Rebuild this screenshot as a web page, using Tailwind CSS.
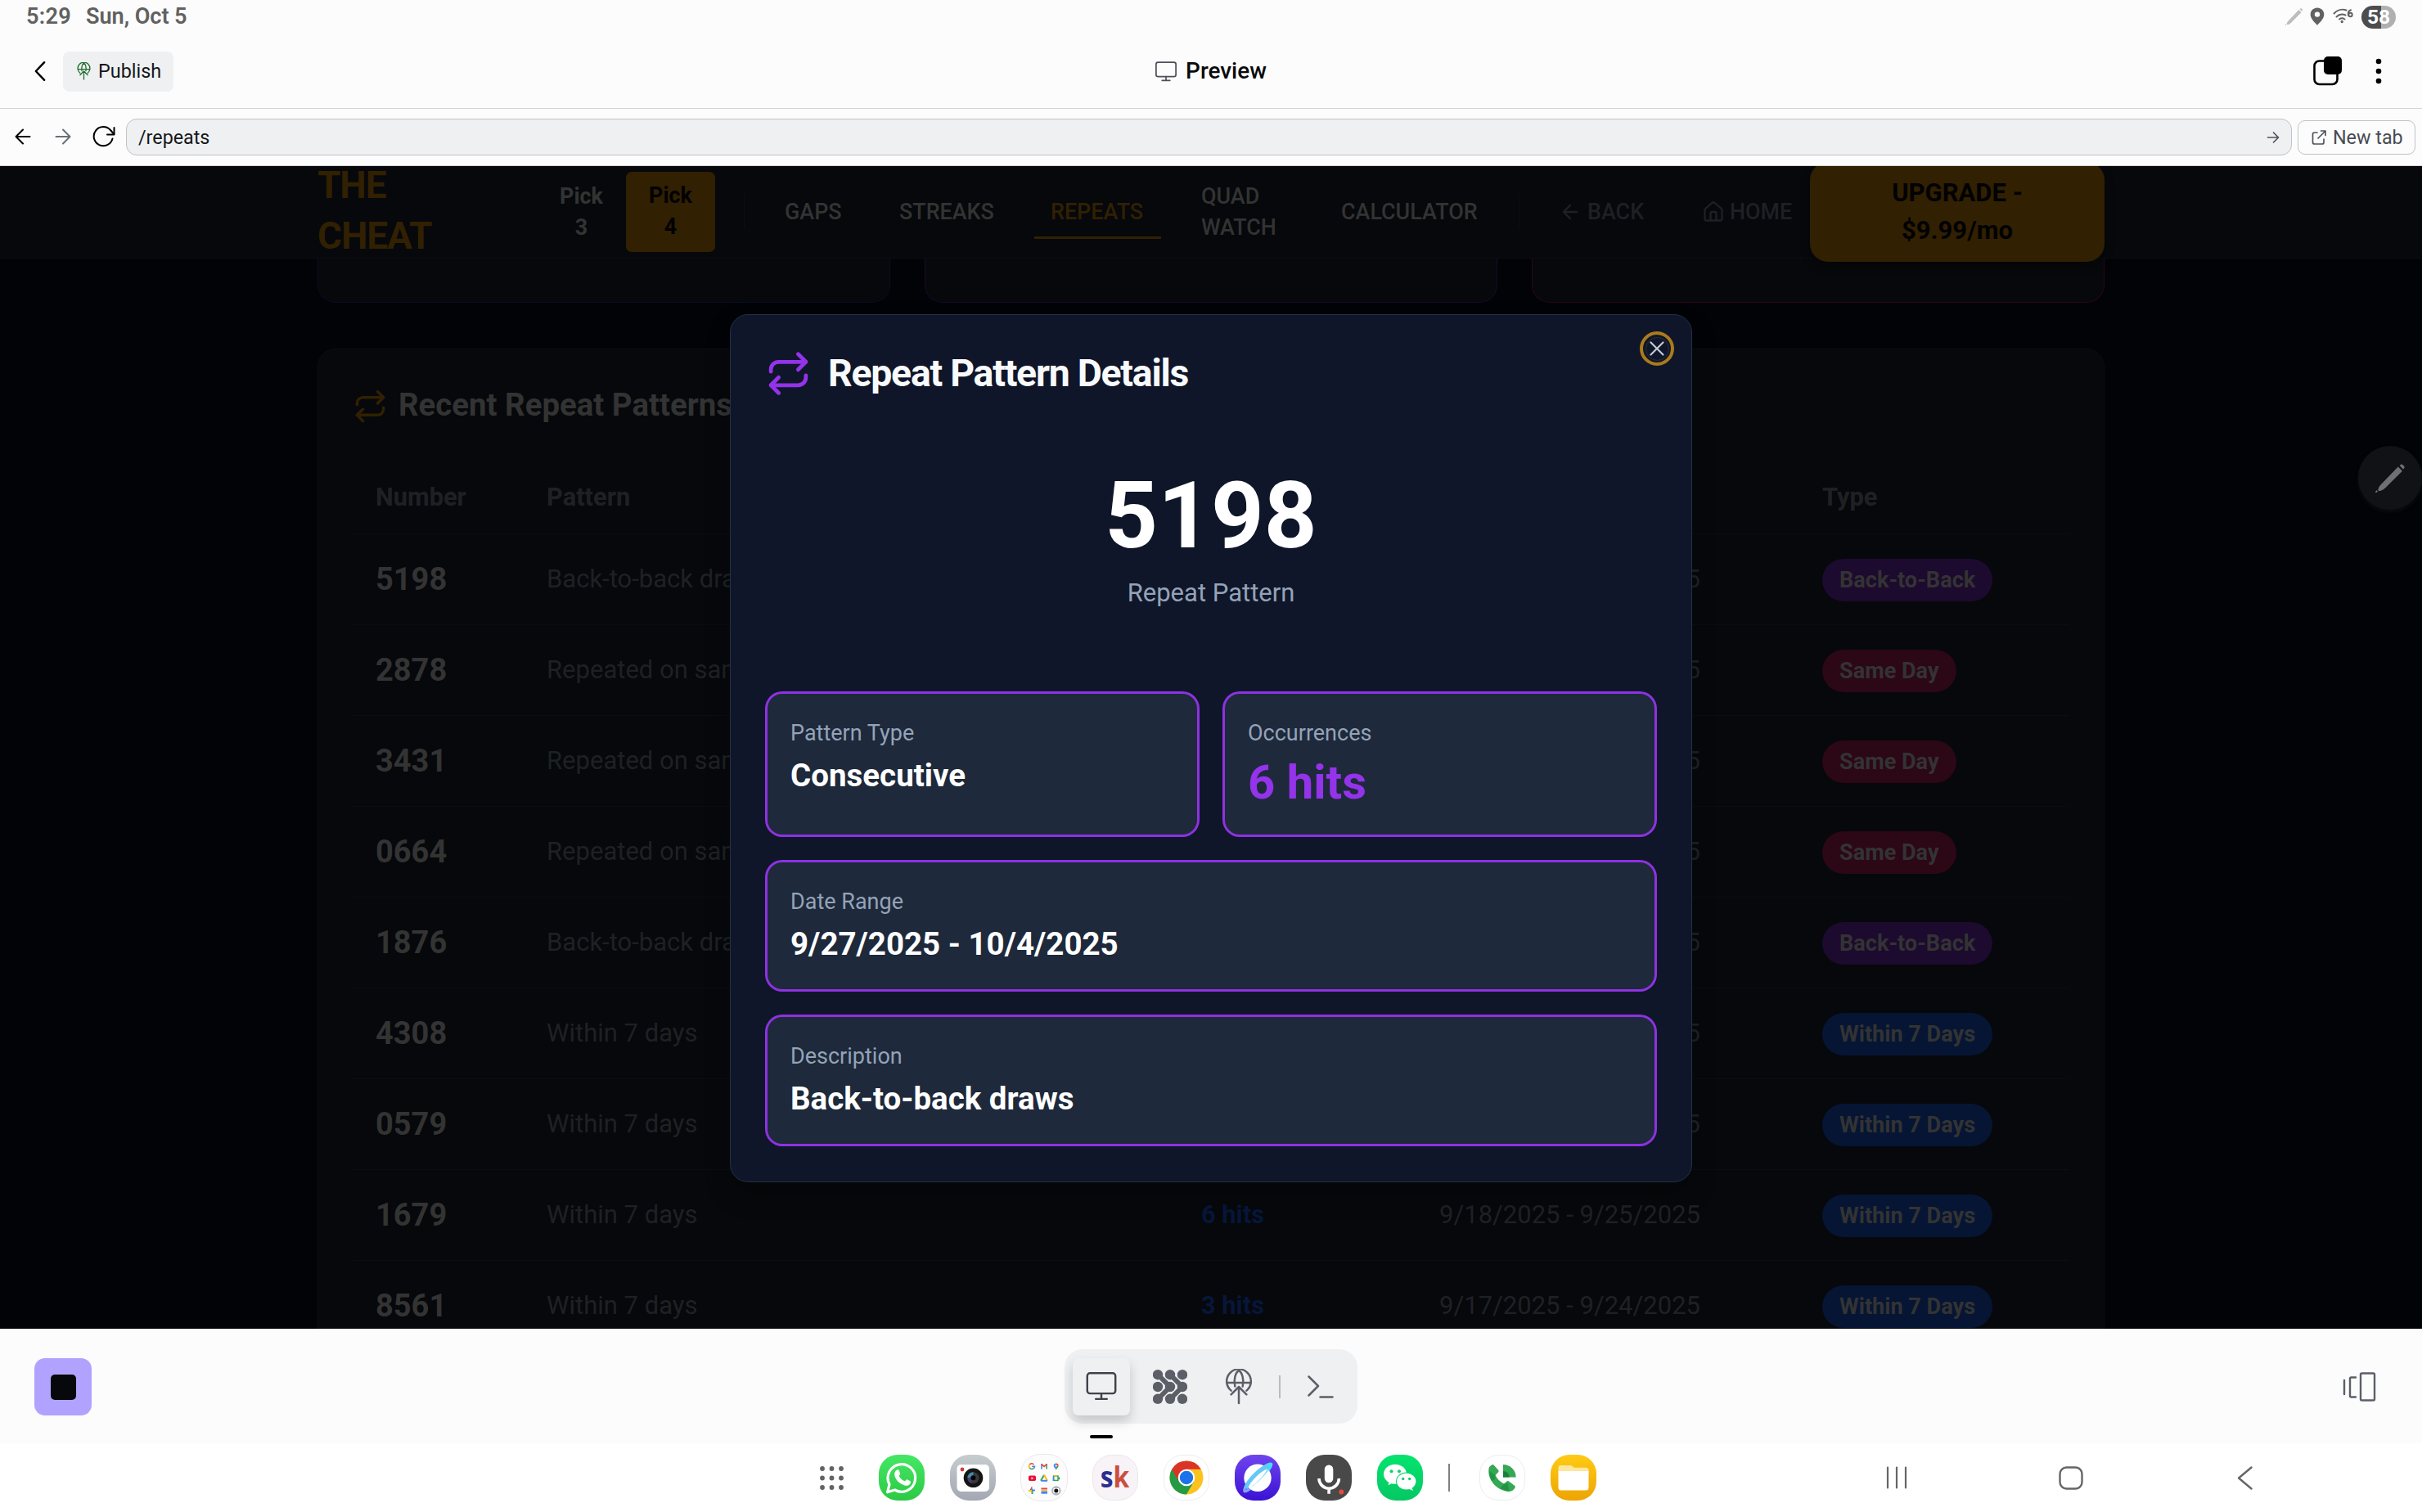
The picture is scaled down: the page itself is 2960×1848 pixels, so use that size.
<!DOCTYPE html>
<html lang="en">
<head>
<meta charset="utf-8">
<title>Preview</title>
<script src="https://cdn.jsdelivr.net/npm/@tailwindcss/browser@4"></script>
</head>
<body class="w-[2960px] h-[1848px] overflow-hidden flex flex-col bg-[#fcfcfc] font-['Roboto',sans-serif] text-black">

<!-- Shared icon shapes -->
<svg class="hidden">
  <symbol id="repeat" viewBox="0 0 24 24" fill="none" stroke="currentColor" stroke-width="2" stroke-linecap="round" stroke-linejoin="round"><path d="m17 2 4 4-4 4"/><path d="M3 11v-1a4 4 0 0 1 4-4h14"/><path d="m7 22-4-4 4-4"/><path d="M21 13v1a4 4 0 0 1-4 4H3"/></symbol>
  <symbol id="globe-up" viewBox="0 0 34 44" fill="none" stroke="currentColor" stroke-width="2.500" stroke-linecap="round" stroke-linejoin="round"><path d="M7.6 26.6A14.8 14.8 0 1 1 26.4 26.6"/><path d="M2.2 17h29.6"/><path d="M12.3 21.5C10.3 13 13 4.500 17 2.200c4 2.300 6.700 10.800 4.700 19.300"/><path d="M17 42V22M7.600 31.400 17 22l9.400 9.400"/></symbol>
  <symbol id="monitor" viewBox="0 0 38 36" fill="none" stroke="currentColor" stroke-width="2.500" stroke-linecap="round" stroke-linejoin="round"><rect x="1.300" y="1.300" width="35.400" height="25.600" rx="3.500"/><path d="M19 27v6.500M12 33.800h14"/></symbol>
  <symbol id="pen" viewBox="0 0 40 38" fill="currentColor"><path d="M33.500 1.500c.8-.8 2-.6 2.700.1l1.800 1.900c.7.8.7 1.800 0 2.600l-1.200 1.200-4.500-4.500z"/><path d="m30.300 4.300 5.400 5.400-21.700 21.700c-2.500 2.400-5.400 3.900-8 4.200-1.300-.4-1.600-1.300-1.300-2.400.7-2.600 2.200-4.900 4.500-7z"/><path d="m2.500 34.300 1.700 1.700-1.700 1.300c-.9.500-1.700-.2-1.300-1.200z"/></symbol>
</svg>

<!-- System status bar -->
<div class="h-[40px] shrink-0 flex items-center justify-between pl-[32px] pr-[32px] text-[#616161]">
  <div class="flex items-center gap-[18px] font-semibold text-[27.100px] leading-[38px] tracking-[0.300px]"><span>5:29</span><span class="tracking-[-0.050px]">Sun, Oct 5</span></div>
  <div class="flex items-center">
    <svg class="w-[23px] h-[23px] text-[#bdbdbd]"><use href="#pen"/></svg>
    <svg class="ml-[8px] w-[18px] h-[22px]" viewBox="0 0 18 22" fill="#616161"><path fill-rule="evenodd" d="M9 .5C4.300.5.700 4.100.700 8.700.700 14 6 18.500 9 21.700c3-3.200 8.300-7.700 8.300-13C17.300 4.100 13.700.5 9 .5zm0 11.300a3.200 3.200 0 1 1 0-6.400 3.200 3.200 0 0 1 0 6.400z"/></svg>
    <svg class="ml-[10px] w-[25px] h-[22px]" viewBox="0 0 25 22" fill="none" stroke="#616161" stroke-width="2" stroke-linecap="round"><path d="M1.500 7.500A14 14 0 0 1 16.500 3.500"/><path d="M4.500 11.500A10 10 0 0 1 15.500 9.500"/><path d="M8 14.500a5.500 5.500 0 0 1 6.500 0"/><circle cx="11.200" cy="17.500" r=".7" fill="#616161"/><path d="M22 3.200c-3 .8-3.400 4-3 6.300"/><circle cx="21.500" cy="9" r="2.200"/></svg>
    <div class="ml-[10px] w-[42px] h-[28px] mt-[1px] rounded-full flex items-center justify-center text-white text-[24.500px] font-bold leading-[28px] bg-linear-to-r from-[#4d4d4d] from-58% to-[#b0b0b0] to-58%">58</div>
  </div>
</div>

<!-- App header -->
<header class="h-[93px] shrink-0 border-b border-[#d3d4d6] grid grid-cols-3 items-center pb-0">
  <div class="flex items-center pl-[41px]">
    <svg class="w-[16px] h-[26px] mt-px" viewBox="0 0 17 26" fill="none" stroke="#000" stroke-width="2.600" stroke-linecap="round" stroke-linejoin="round"><path d="M14 1.500 3 13l11 11.500"/></svg>
    <div class="ml-[20px] w-[135px] h-[49px] mt-[2px] rounded-[8px] bg-[#eff0f2] flex items-center pl-[17px]">
      <svg class="w-[17px] h-[22px] text-[#1c6b2c]"><use href="#globe-up"/></svg>
      <span class="ml-[8px] pl-px text-[23.400px] leading-[30px] text-[#15171a]">Publish</span>
    </div>
  </div>
  <div class="flex items-center justify-center gap-[11px] mt-[2px]">
    <svg class="w-[26px] h-[25px] text-[#4c4f57]"><use href="#monitor"/></svg>
    <span class="text-[27.900px] leading-[36px] font-medium text-[#0a0a0b]">Preview</span>
  </div>
  <div class="flex items-center justify-end pr-[49px]">
    <svg class="w-[36px] h-[37px] mt-[1px]" viewBox="0 0 36 37"><rect x="1.500" y="6.500" width="28" height="28.500" rx="6" fill="none" stroke="#000" stroke-width="2.600"/><rect x="13" y="1" width="22" height="22" rx="5" fill="#000"/></svg>
    <svg class="ml-[40px] w-[8px] h-[32px] mt-px" viewBox="0 0 8 32"><circle cx="4" cy="4" r="3.300"/><circle cx="4" cy="16" r="3.300"/><circle cx="4" cy="28" r="3.300"/></svg>
  </div>
</header>

<!-- Address bar -->
<div class="h-[70px] shrink-0 border-b border-[#d3d4d6] flex items-center pl-[17px] pr-[8px]">
  <svg class="w-[22px] h-[22px] -mt-[2px]" viewBox="0 0 22 22" fill="none" stroke="#000" stroke-width="2" stroke-linecap="round" stroke-linejoin="round"><path d="M19.500 11H2.500M11 2.500 2.500 11l8.500 8.500"/></svg>
  <svg class="ml-[27px] w-[22px] h-[22px] -mt-[2px]" viewBox="0 0 22 22" fill="none" stroke="#6b6e75" stroke-width="2" stroke-linecap="round" stroke-linejoin="round"><path d="M2.500 11h17M11 2.500l8.500 8.500-8.500 8.500"/></svg>
  <svg class="ml-[25px] w-[28px] h-[26px] -mt-[2px]" viewBox="0 0 28 26" fill="none" stroke="#000" stroke-width="2" stroke-linecap="round" stroke-linejoin="round"><path d="M26.500 2v8.500H18"/><path d="M24.500 15.500A11.600 11.600 0 1 1 22 5l4.300 5"/></svg>
  <div class="ml-[13px] w-[2647px] h-[45px] rounded-[13px] border border-[#c0c2c6] bg-[#eff0f2] flex items-center justify-between pl-[14px] pr-[14px]">
    <span class="text-[23.300px] leading-[30px] text-[#15171a]">/repeats</span>
    <svg class="w-[16px] h-[16px]" viewBox="0 0 16 16" fill="none" stroke="#50535b" stroke-width="1.700" stroke-linecap="round" stroke-linejoin="round"><path d="M1.500 8h13M8.500 2l6 6-6 6"/></svg>
  </div>
  <div class="ml-[7px] w-[144px] h-[42px] rounded-[9px] border border-[#c0c2c6] flex items-center pl-[16px]">
    <svg class="w-[18px] h-[18px]" viewBox="0 0 18 18" fill="none" stroke="#50535b" stroke-width="1.700" stroke-linecap="round" stroke-linejoin="round"><path d="M7 3H3.500A2 2 0 0 0 1.500 5v10a2 2 0 0 0 2 2h9.500a2 2 0 0 0 2-2v-4"/><path d="M11.500 1h5.500v5.500M17 1 8 10"/></svg>
    <span class="ml-[8px] text-[23.300px] leading-[30px] text-[#484b52]">New tab</span>
  </div>
</div>

<!-- Previewed page -->
<main class="relative h-[1421px] shrink-0 overflow-hidden bg-[#020307]">
  <nav class="-mt-px h-[114px] bg-[#06080b] border-b border-[#0b0d11] pl-[388px] flex items-center font-medium text-[26.900px] leading-[38px] text-[#333]">
    <div class="w-[268px] -mt-[3px] text-[46px] leading-[62px] font-bold tracking-[-1.160px] text-[#312002]">THE<br>CHEAT</div>
    <div class="w-[109px] text-center font-bold">Pick<br>3</div>
    <div class="w-[109px] h-[98px] rounded-[7px] bg-[#312002] text-[#020202] text-center font-bold pt-[10px] mt-[1px]">Pick<br>4</div>
    <div class="ml-[35px] w-px h-[43px] bg-[#0b0d11]"></div>
    <div class="ml-[49px]  w-[140px]">GAPS</div>
    <div class="w-[165px]">STREAKS</div>
    <div class="w-[155px] h-[66px] border-b-3 border-[#312002] pl-[20px] pt-[14px] text-[#312002] mt-[1px]">REPEATS</div>
    <div class="ml-[49px] w-[171px]">QUAD<br>WATCH</div>
    <div class="w-[217px]">CALCULATOR</div>
    <div class="w-px h-[43px] bg-[#0b0d11]"></div>
    <div class="ml-[48px] flex items-center text-[#1d2024]">
      <svg class="w-[28px] h-[28px]" viewBox="0 0 24 24" fill="none" stroke="currentColor" stroke-width="2" stroke-linecap="round" stroke-linejoin="round"><path d="m12 19-7-7 7-7M19 12H5"/></svg>
      <span class="ml-[7px] w-[140px]">BACK</span>
      <svg class="w-[28px] h-[28px]" viewBox="0 0 24 24" fill="none" stroke="currentColor" stroke-width="2" stroke-linecap="round" stroke-linejoin="round"><path d="M15 21v-8a1 1 0 0 0-1-1h-4a1 1 0 0 0-1 1v8"/><path d="M3 10a2 2 0 0 1 .709-1.528l7-5.999a2 2 0 0 1 2.582 0l7 5.999A2 2 0 0 1 21 10v9a2 2 0 0 1-2 2H5a2 2 0 0 1-2-2z"/></svg>
      <span class="ml-[6px] w-[98px]">HOME</span>
    </div>
    <div class="relative z-10 w-[360px] h-[122px] shrink-0 rounded-[22px] bg-[#312002] text-[#020202] text-[31px] leading-[46px] font-bold text-center pt-[15px] shadow-[0_6px_12px_rgba(0,0,0,0.350)]">UPGRADE -<br>$9.99/mo</div>
  </nav>

  <section class="pl-[388px] flex gap-[42px]">
    <div class="w-[700px] h-[54px] rounded-b-[22px] bg-[#06080b] border border-t-0 border-[#051022]"></div>
    <div class="w-[700px] h-[54px] rounded-b-[22px] bg-[#06080b] border border-t-0 border-[#1a0a2b]"></div>
    <div class="w-[700px] h-[54px] rounded-b-[22px] bg-[#06080b] border border-t-0 border-[#2b0716]"></div>
  </section>

  <section class="ml-[388px] mt-[56px] w-[2184px] h-[1260px] rounded-[22px] bg-[#06080b] border border-[#0b0d11] px-[42px]">
    <div class="h-[135px] flex items-center gap-[12px]">
      <svg class="w-[43px] h-[43px] text-[#312002] mt-[3px]"><use href="#repeat"/></svg>
      <h2 class="pl-px text-[38.400px] font-bold leading-[54px] text-[#333]">Recent Repeat Patterns</h2>
    </div>
    <div id="table" class="[&>div]:grid [&>div]:grid-cols-[209px_800px_291px_468px_1fr] [&>div]:items-center [&>div]:pl-[28px] [&>div]:border-b [&>div]:border-[#0b0d11]">
      <div class="h-[91px] text-[30.800px] font-bold text-[#1e2124] pt-[3px]"><span>Number</span><span>Pattern</span><span></span><span></span><span>Type</span></div>
    </div>
  </section>

  <!-- Floating pen control -->
  <div class="absolute left-[2882px] top-[342px] w-[78px] h-[78px] rounded-full bg-[#111215] flex items-center justify-center shadow-[0_3px_4px_rgba(17,18,21,0.600)]"><svg class="w-[38px] h-[37px] text-[#6f7073]"><use href="#pen"/></svg></div>

  <!-- Pattern details dialog -->
  <div class="absolute z-20 left-[892px] top-[181px] w-[1176px] h-[1061px] rounded-[22px] border border-[#22304a] bg-[#0f1629] px-[42px] pt-[42px] text-white shadow-[0_15px_30px_rgba(0,0,0,0.250)]">
    <div class="flex items-center h-[58px] gap-[17px]">
      <svg class="w-[57px] h-[57px] text-[#9333ea]"><use href="#repeat"/></svg>
      <h1 class="ml-[3px] text-[46.400px] font-bold tracking-[-1.250px] leading-[58px] text-[#f8fafc]">Repeat Pattern Details</h1>
    </div>
    <div class="mt-[88px] text-center text-[113px] leading-[115px] font-bold">5198</div>
    <div class="mt-[14px] text-center text-[31px] leading-[46px] text-[#94a3b8]">Repeat Pattern</div>
    <div class="mt-[97px] grid grid-cols-2 gap-[28px] text-[38.500px] leading-[54px] font-bold [&>div]:border-3 [&>div]:border-[#9333ea]/95 [&>div]:rounded-[21px] [&>div]:bg-[#1e293b] [&>div]:px-[28px] [&>div]:pt-[29px] [&_span]:block [&_span]:mb-[6px] [&_span]:text-[27px] [&_span]:leading-[38px] [&_span]:font-normal [&_span]:text-[#94a3b8]">
      <div class="h-[178px]"><span>Pattern Type</span><p>Consecutive</p></div>
      <div class="h-[178px]"><span>Occurrences</span><p class="text-[58px] leading-[70px] font-bold text-[#9333ea]">6 hits</p></div>
      <div class="col-span-2 h-[161px]"><span>Date Range</span><p>9/27/2025 - 10/4/2025</p></div>
      <div class="col-span-2 h-[161px]"><span>Description</span><p>Back-to-back draws</p></div>
    </div>
    <button class="absolute left-[1111px] top-[20px] w-[42px] h-[42px] rounded-full border-4 border-[#ab7a1c] flex items-center justify-center">
      <span class="w-[29px] h-[29px] shrink-0 rounded-full border border-[#2b3038] flex items-center justify-center"><svg class="w-[18px] h-[18px] shrink-0" viewBox="0 0 18 18" stroke="#c3c8d2" stroke-width="2.200" stroke-linecap="round"><path d="m1.500 1.500 15 15M16.500 1.500l-15 15"/></svg></span>
    </button>
  </div>
</main>

<!-- Workspace toolbar -->
<footer class="h-[140px] shrink-0 grid grid-cols-[1fr_358px_1fr] items-center">
  <div class="ml-[42px] w-[70px] h-[70px] rounded-[13px] bg-[#b1a2ff] flex items-center justify-center mt-[2px]"><div class="w-[31px] h-[31px] rounded-[5px] bg-[#07080b]"></div></div>
  <div class="relative h-[91px] rounded-[22px] bg-[#eff0f2] flex items-center pl-[10px] mt-px text-[#5c5f68]">
    <div class="w-[70px] h-[70px] rounded-[7px] bg-[#eff0f2] shadow-[0_7px_14px_rgba(0,0,0,0.180)] flex items-center justify-center"><svg class="w-[38px] h-[35px] text-[#40424a]"><use href="#monitor"/></svg></div>
    <svg class="ml-[28px] w-[42px] h-[42px]" viewBox="0 0 42 42" fill="currentColor" stroke="none"><path d="M6 6 21 21 6 36M21 6 36 21 21 36" fill="none" stroke="currentColor" stroke-width="6"/><circle cx="6" cy="6.200" r="6.200"/><circle cx="21" cy="6.200" r="6.200"/><circle cx="36" cy="6.200" r="6.200"/><circle cx="6" cy="21" r="6.200"/><circle cx="21" cy="21" r="6.200"/><circle cx="36" cy="21" r="6.200"/><circle cx="6" cy="35.800" r="6.200"/><circle cx="21" cy="35.800" r="6.200"/><circle cx="36" cy="35.800" r="6.200"/></svg>
    <svg class="ml-[46px] w-[34px] h-[44px]"><use href="#globe-up"/></svg>
    <div class="ml-[32px] w-[2px] h-[28px] bg-[#b9bbc0]"></div>
    <svg class="ml-[33px] w-[32px] h-[28px]" viewBox="0 0 32 28" fill="none" stroke="currentColor" stroke-width="2.500" stroke-linecap="round" stroke-linejoin="round"><path d="m1.500 1.500 11.500 11.500L1.500 24.500M15.500 26.500h15"/></svg>
    <div class="absolute left-[31px] top-[105px] w-[28px] h-[4px] rounded-full bg-black"></div>
  </div>
  <svg class="justify-self-end mr-[56px] w-[42px] h-[36px] mt-px" viewBox="0 0 42 36" fill="none" stroke="#5c5f68" stroke-width="2.400" stroke-linecap="round" stroke-linejoin="round"><path d="M3 10v17M17 6.500h-5.500q-1.500 0-1.500 1.500v21q0 1.500 1.500 1.500H17"/><rect x="23" y="1.500" width="17" height="33" rx="1.500"/></svg>
</footer>

<!-- System dock -->
<div class="relative h-[84px] shrink-0 bg-white flex items-center pl-[1001px]">
  <svg class="w-[30px] h-[30px]" viewBox="0 0 30 30" fill="#636363"><circle cx="4" cy="4" r="2.900"/><circle cx="15.500" cy="4" r="2.900"/><circle cx="27" cy="4" r="2.900"/><circle cx="4" cy="15.500" r="2.900"/><circle cx="15.500" cy="15.500" r="2.900"/><circle cx="27" cy="15.500" r="2.900"/><circle cx="4" cy="27" r="2.900"/><circle cx="15.500" cy="27" r="2.900"/><circle cx="27" cy="27" r="2.900"/></svg>

  <div class="ml-[43px] w-[1300px] flex items-center gap-[31px]">
    <svg class="w-[56px] h-[56px] rounded-[23px]" viewBox="0 0 56 56"><defs><linearGradient id="gw" x2="0" y2="1"><stop stop-color="#45e765"/><stop offset="1" stop-color="#2cc944"/></linearGradient></defs><rect width="56" height="56" fill="url(#gw)"/><path d="M10.500 45.800 13 36.300A16.800 16.800 0 1 1 19.500 43z" fill="none" stroke="#fff" stroke-width="3.200" stroke-linejoin="round"/><path d="M21.500 19c1.800-1.300 2.800-.7 3.300.6l1.300 3.200c.5 1.200-1.600 2.800-1.300 3.400 1.700 3 4 4.900 6.800 6.100.8.300 2-2.500 3.200-2l3.300 1.700c1.400.6 1 2.300.3 3.400-1.500 2.400-4.700 3-7.700 1.900-5.200-1.800-8.500-5-10.500-9.200-1.500-3.300-1.300-7.200 1.300-9.100z" fill="#fff"/></svg>

    <svg class="w-[56px] h-[56px] rounded-[23px]" viewBox="0 0 56 56"><defs><linearGradient id="gc" x2="0" y2="1"><stop stop-color="#c6cdce"/><stop offset="1" stop-color="#a3a7b3"/></linearGradient></defs><rect width="56" height="56" fill="url(#gc)"/><rect x="8.500" y="12" width="39.500" height="33" rx="5" fill="#fff"/><circle cx="28.500" cy="28.300" r="11.800" fill="#151515"/><circle cx="28.500" cy="28.300" r="7" fill="#39393b"/><path d="M28.500 21.300a7 7 0 0 0-7 7h4a3 3 0 0 1 3-3z" fill="#3d8ea8"/><path d="M21.500 28.300a7 7 0 0 0 5 6.700v-4a3 3 0 0 1-1-2.700z" fill="#4b3d6e"/><circle cx="28.500" cy="28.300" r="3" fill="#050505"/><circle cx="15" cy="18" r="2.400" fill="#d63a35"/></svg>

    <svg class="w-[58px] h-[58px] -mx-px" viewBox="0 0 58 58"><rect x=".5" y=".5" width="57" height="57" rx="24" fill="#fcfcfd" stroke="#e8e8ea"/>
      <g fill="none" stroke-width="1.600"><path d="M16.500 13a3.300 3.300 0 0 0-5-.1" stroke="#ea4335"/><path d="M11.500 12.900a3.300 3.300 0 0 0-.1 4.300" stroke="#fbbc04"/><path d="M11.300 17.100a3.300 3.300 0 0 0 5 .4" stroke="#34a853"/><path d="M14.200 15.200h3.300q0 1.500-1.200 2.500" stroke="#4285f4"/></g>
      <path d="M26 18.500v-6" stroke="#4285f4" stroke-width="1.600"/><path d="M32.200 18.500v-6" stroke="#34a853" stroke-width="1.600"/><path d="m25.600 12.300 3.500 3 3.500-3" stroke="#ea4335" stroke-width="1.700" fill="none"/>
      <path d="M43.700 20c-.4-2-3-3.200-3-5.500a3 3 0 0 1 3-3z" fill="#4285f4"/><path d="M43.700 20c.4-2 3-3.200 3-5.500h-3z" fill="#34a853"/><path d="M43.700 11.500a3 3 0 0 1 3 3h-3z" fill="#ea4335"/><circle cx="43.700" cy="14.500" r="1.100" fill="#fff"/>
      <rect x="10" y="26.500" width="9" height="6.500" rx="1.700" fill="#eb1036"/><path d="m13.500 28.300 2.600 1.500-2.600 1.500z" fill="#fff"/>
      <path d="m29 25.800-4 7" stroke="#34a853" stroke-width="2"/><path d="m29 25.800 4 7" stroke="#fbbc04" stroke-width="2"/><path d="M25.500 32.800h7.500" stroke="#4285f4" stroke-width="2"/>
      <rect x="40.600" y="27" width="5.400" height="5.400" fill="none" stroke="#34a853" stroke-width="1.500"/><path d="M40.500 33v-5.500" stroke="#4285f4" stroke-width="1.600"/><path d="M41 26.900h4" stroke="#fbbc04" stroke-width="1.500"/><path d="m46 29.700 2-1.800v3.800z" fill="#188038"/>
      <path d="M14 40.500v4h-2z" fill="#ea4335" stroke="#ea4335"/><path d="M18 44.500h-4v-2" stroke="#4285f4" stroke-width="2" fill="none"/><path d="M14.500 49v-4" stroke="#34a853" stroke-width="2"/><path d="M10 45h4" stroke="#fbbc04" stroke-width="2"/>
      <path d="M25.500 42.500h7.500" stroke="#ea4335" stroke-width="2"/><path d="M25.500 44.800h7.500" stroke="#fbbc04" stroke-width="1.500"/><path d="M25.500 47.200h7.500" stroke="#4285f4" stroke-width="3"/>
      <circle cx="43.800" cy="45" r="5.800" fill="#b3b7be"/><rect x="40.300" y="42" width="7" height="6" rx="1" fill="#fff"/><circle cx="43.800" cy="45" r="2.500" fill="#151515"/></svg>

    <svg class="w-[56px] h-[56px]" viewBox="0 0 56 56"><rect x=".5" y=".5" width="55" height="55" rx="23" fill="#f8f3f7" stroke="#ebe6ea"/><text x="9.800" y="39.800" font-family="Open Sans, sans-serif" font-weight="700" font-size="35" textLength="35.500" lengthAdjust="spacingAndGlyphs" fill="#2b2f90">s<tspan fill="#c9503f">k</tspan></text></svg>

    <svg class="w-[56px] h-[56px]" viewBox="0 0 56 56"><rect x=".5" y=".5" width="55" height="55" rx="23" fill="#fff" stroke="#ececec"/><circle cx="28" cy="28" r="20.500" fill="#fcc31e"/><path d="M28 28 10.200 17.800A20.500 20.500 0 0 0 28 48.500l9-15.400z" fill="#259a44"/><path d="M10.200 17.800A20.500 20.500 0 0 1 45.800 17.800H28L19 33.200z" fill="#dc3327"/><circle cx="28" cy="28" r="10.300" fill="#fff"/><circle cx="28" cy="28" r="8.200" fill="#1a73e8"/></svg>

    <svg class="w-[56px] h-[56px] rounded-[23px]" viewBox="0 0 56 56"><defs><linearGradient id="gi" x2="0" y2="1"><stop stop-color="#6f45ef"/><stop offset="1" stop-color="#3a12d3"/></linearGradient><linearGradient id="gr" x1="1" x2="0"><stop stop-color="#3fe3f5"/><stop offset="1" stop-color="#8a9bff"/></linearGradient></defs><rect width="56" height="56" fill="url(#gi)"/><circle cx="28" cy="28.300" r="16.700" fill="#fff"/><path d="M45.800 10.200c2.300 2.300-3.500 11.300-13.200 21S14.200 48.300 11 46c-3-2.500 2.800-13.300 12.200-22.700S42.700 7.300 45.800 10.200zM40.500 14.500C36 15.500 29.500 20.500 24.500 25.700S14.200 38 13.500 42.500C17 42 24.500 36.500 31 30c5-5 9-11 9.500-15.500z" fill="url(#gr)" fill-rule="evenodd"/><path d="M40.500 14.500C36 15.500 29.500 20.500 24.500 25.700" fill="none" stroke="#fff" stroke-width="0"/><path d="M13.500 41.500C14.500 37 20 29.500 24.500 25S36 15.500 40.500 14.500" fill="none" stroke="#66c8f7" stroke-width="5"/><path d="M17.500 40.500C25 37.500 38 24.500 41 18.200A16.700 16.700 0 0 1 17.500 41z" fill="#fff"/></svg>

    <svg class="w-[56px] h-[56px] rounded-[23px]" viewBox="0 0 56 56"><rect width="56" height="56" fill="#494949"/><rect x="22.800" y="12.500" width="10.500" height="21.800" rx="5.200" fill="#fff"/><path d="M16 29a12.200 12.200 0 0 0 24.400 0M28.100 41.300v6.500" fill="none" stroke="#fff" stroke-width="3.600"/><circle cx="43.300" cy="45.500" r="2.900" fill="#e8483f"/></svg>

    <svg class="w-[56px] h-[56px] rounded-[23px]" viewBox="0 0 56 56"><defs><linearGradient id="gx" x2="0" y2="1"><stop stop-color="#04e46e"/><stop offset="1" stop-color="#05c863"/></linearGradient></defs><rect width="56" height="56" fill="url(#gx)"/><ellipse cx="22" cy="23.800" rx="14" ry="12" fill="#fff"/><path d="m15 32-1.500 5.200 6-3z" fill="#fff"/><circle cx="17.500" cy="20.300" r="2" fill="#05d668"/><circle cx="27" cy="20.300" r="2" fill="#05d668"/><ellipse cx="35.700" cy="32.600" rx="12.700" ry="11" fill="#05d267"/><ellipse cx="35.700" cy="32.600" rx="11.700" ry="10" fill="#fff"/><path d="m42 39.500 2 4.500-5.500-2.500z" fill="#fff"/><circle cx="31.700" cy="29.500" r="1.700" fill="#05d267"/><circle cx="39.700" cy="29.500" r="1.700" fill="#05d267"/></svg>

    <div class="w-[2px] h-[34px] bg-[#808080]"></div>

    <svg class="ml-[5px] w-[56px] h-[56px]" viewBox="0 0 56 56"><rect x=".5" y=".5" width="55" height="55" rx="23" fill="#fff" stroke="#ececec"/><path d="m12 15 3-2.500q1.500-1 2.700.3l5.500 6q1 1.200 0 2.400L19.500 25q3 6.500 10.500 10.500l3.500-3q1.200-1 2.500 0l7 5.300q1.500 1.300.5 2.700-2.500 4-6.500 4.500C24 45 11.500 33.500 11.300 21q0-4 .7-6z" fill="#34a853"/><path d="m12 20 7.500 5q-1 2 0 4.500l-4 2.500q-3.500-6-3.500-12zM26 41l4-5.500q3 1 4.500-1l2 10.300q-5-.3-10.500-3.800z" fill="#1e8e3e" opacity=".8"/><path d="M29 12a15.700 15.700 0 0 1 15.700 15.500H29z" fill="#34a853"/><path d="M29 20a7.500 7.500 0 0 1 7.700 7.500H29z" fill="#188038"/></svg>

    <svg class="w-[56px] h-[56px] rounded-[23px]" viewBox="0 0 56 56"><defs><linearGradient id="gf" x2="0" y2="1"><stop stop-color="#fecb14"/><stop offset="1" stop-color="#eda403"/></linearGradient></defs><rect width="56" height="56" fill="url(#gf)"/><path d="M9.500 22v-6q0-3 3-3H25l4 2.800h14q3.500 0 3.500 3.200v4z" fill="#fee79d"/><path d="M9.500 20h37v20q0 3.500-3.500 3.500H13q-3.500 0-3.500-3.500z" fill="#fff"/></svg>
  </div>

  <div class="ml-[-69px] flex items-center">
    <svg class="w-[26px] h-[28px]" viewBox="0 0 26 28" stroke="#666" stroke-width="2.200" stroke-linecap="round"><path d="M2 1.500v25M13 1.500v25M24 1.500v25"/></svg>
    <svg class="ml-[185px] w-[30px] h-[29px]" viewBox="0 0 30 29" fill="none" stroke="#666" stroke-width="2.400"><rect x="1.500" y="1.500" width="27" height="26" rx="8"/></svg>
    <svg class="ml-[188px] w-[20px] h-[29px]" viewBox="0 0 20 29" fill="none" stroke="#666" stroke-width="2.400" stroke-linecap="round" stroke-linejoin="round"><path d="M17.500 1.500 2 14.500l15.500 13"/></svg>
  </div>
</div>

<script>
  const styles = {
    'Back-to-Back': ['bg-[#1d0a2f]', 'text-[#1d0a2f]'],
    'Same Day': ['bg-[#2c0716]', 'text-[#2c0716]'],
    'Within 7 Days': ['bg-[#061534]', 'text-[#07163a]']
  };
  const rows = [
    ['5198', 'Back-to-back draws', '', '9/27/2025 - 10/4/2025', 'Back-to-Back'],
    ['2878', 'Repeated on same day', '', '9/28/2025 - 9/28/2025', 'Same Day'],
    ['3431', 'Repeated on same day', '', '9/26/2025 - 9/26/2025', 'Same Day'],
    ['0664', 'Repeated on same day', '', '9/24/2025 - 9/24/2025', 'Same Day'],
    ['1876', 'Back-to-back draws', '', '9/22/2025 - 9/23/2025', 'Back-to-Back'],
    ['4308', 'Within 7 days', '', '9/20/2025 - 9/27/2025', 'Within 7 Days'],
    ['0579', 'Within 7 days', '', '9/19/2025 - 9/26/2025', 'Within 7 Days'],
    ['1679', 'Within 7 days', '6 hits', '9/18/2025 - 9/25/2025', 'Within 7 Days'],
    ['8561', 'Within 7 days', '3 hits', '9/17/2025 - 9/24/2025', 'Within 7 Days']
  ];
  document.getElementById('table').insertAdjacentHTML('beforeend', rows.map(([n, p, h, d, t]) =>
    `<div class="h-[111px] text-[31px] text-[#1e2124]"><span class="pt-px text-[38px] font-bold text-[#333]">${n}</span><span class="pt-px">${p}</span><span class="pt-px font-bold text-[30.800px] ${styles[t][1]}">${h}</span><span class="pt-px">${d}</span><span class="justify-self-start h-[52px] mt-[2px] px-[21px] rounded-full font-bold text-[27.100px] leading-[52px] text-[#333] ${styles[t][0]}">${t}</span></div>`).join(''));
</script>
</body>
</html>
